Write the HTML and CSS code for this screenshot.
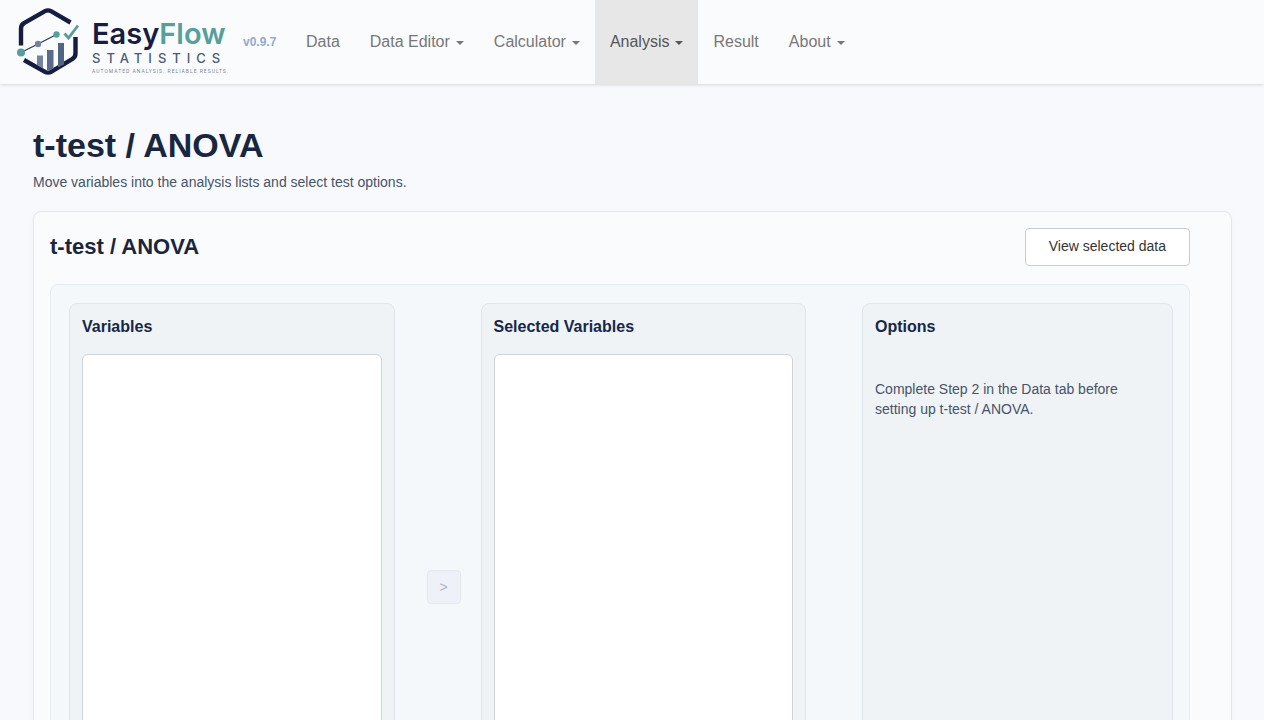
FILE: index.html
```html
<!DOCTYPE html>
<html lang="en">
<head>
    <meta charset="UTF-8">
    <meta name="viewport" content="width=device-width, initial-scale=1.0">
    <title>EasyFlow Statistics</title>
    <link rel="stylesheet" href="styles.css">
</head>
<body>
    <header class="navbar">
        <a class="brand" href="#">
            <svg class="brand-icon" width="64" height="70" viewBox="0 0 64 70" aria-hidden="true">
                <g fill="none" stroke="#171c42" stroke-width="4.400" stroke-linejoin="round">
                    <path d="M4 38.500V21.500Q4 18 7 16.200L28 4.200Q31 2.500 34 4.200L53.500 15.500"/>
                    <path d="M58.500 30V46.500Q58.500 50 55.500 51.800L34 64.800Q31 66.500 28 64.800L7 53"/>
                </g>
                <path d="M20 48.500H26V61.500L20 58Z" fill="#74829f"/>
                <path d="M30 43H36.500V61.500Q33 64 30 63Z" fill="#596b88"/>
                <path d="M41 36H47V57.500L41 60.500Z" fill="#506582"/>
                <path d="M4 45.500L21 37L39.500 27.500" fill="none" stroke="#30384f" stroke-width="1.300"/>
                <circle cx="4" cy="45.500" r="4" fill="#55a09c"/>
                <circle cx="21" cy="37" r="3.200" fill="#74839d"/>
                <circle cx="39.500" cy="27.500" r="3.200" fill="#55a09c"/>
                <path d="M47.500 26.500L51.500 31L61 18.500" fill="none" stroke="#55a09c" stroke-width="2.800"/>
            </svg>
            <span class="brand-text">
                <span class="brand-name">Easy<span class="brand-accent">Flow</span></span>
                <span class="brand-sub">STATISTICS</span>
                <span class="brand-tagline">AUTOMATED ANALYSIS. RELIABLE RESULTS.</span>
            </span>
        </a>
        <span class="version">v0.9.7</span>
        <nav class="nav">
            <a href="#">Data</a>
            <a href="#">Data Editor <span class="caret"></span></a>
            <a href="#">Calculator <span class="caret"></span></a>
            <a href="#" class="active">Analysis <span class="caret"></span></a>
            <a href="#">Result</a>
            <a href="#">About <span class="caret"></span></a>
        </nav>
    </header>

    <main class="page">
        <h1>t-test / ANOVA</h1>
        <p class="subtitle">Move variables into the analysis lists and select test options.</p>

        <section class="card">
            <div class="card-header">
                <h2>t-test / ANOVA</h2>
                <button class="btn" type="button">View selected data</button>
            </div>

            <div class="setup">
                <div class="panel">
                    <label for="variables">Variables</label>
                    <select id="variables" class="list" multiple></select>
                </div>
                <div class="move">
                    <button class="btn-move" type="button" disabled>&gt;</button>
                </div>
                <div class="panel">
                    <label for="selected">Selected Variables</label>
                    <select id="selected" class="list" multiple></select>
                </div>
                <div class="panel options">
                    <h3>Options</h3>
                    <p>Complete Step 2 in the Data tab before setting up t-test / ANOVA.</p>
                </div>
            </div>
        </section>
    </main>
</body>
</html>
```
FILE: styles.css
```css
* {
    box-sizing: border-box;
}

body {
    margin: 0;
    font-family: "Liberation Sans", Arial, sans-serif;
    font-size: 14px;
    line-height: 20px;
    color: #46536a;
    background-color: #f7f9fc;
}

/* Top bar */
.navbar {
    display: flex;
    align-items: stretch;
    height: 84px;
    padding-left: 17px;
    background-color: #fafbfd;
    box-shadow: 0 1px 3px rgba(20, 30, 50, 0.15);
}

.brand {
    display: flex;
    align-items: center;
    gap: 11px;
    width: 206px;
    text-decoration: none;
}

.brand-icon {
    flex: none;
    overflow: visible;
}

.brand-text {
    display: flex;
    flex-direction: column;
    padding-top: 10px;
    font-family: Inter, sans-serif;
    white-space: nowrap;
}

.brand-name {
    font-size: 29px;
    line-height: 32px;
    font-weight: 600;
    color: #171c42;
}

.brand-accent {
    color: #55a09c;
}

.brand-sub {
    font-size: 13px;
    line-height: 16px;
    font-weight: 500;
    letter-spacing: 6px;
    color: #4b5a76;
}

.brand-tagline {
    font-family: Roboto, sans-serif;
    font-size: 5px;
    line-height: 10px;
    letter-spacing: 1px;
    color: #7d8798;
}

.version {
    align-self: center;
    width: 48px;
    margin-left: 20px;
    font-size: 12px;
    font-weight: 700;
    color: #93a9d3;
}

.nav {
    display: flex;
}

.nav a {
    display: flex;
    align-items: center;
    gap: 6px;
    padding: 0 15px;
    font-size: 16px;
    color: #777;
    text-decoration: none;
}

.nav a:hover {
    color: #333;
}

.nav a.active {
    color: #555;
    background-color: #e7e7e7;
}

.caret {
    margin-top: 2px;
    border-top: 4px solid;
    border-left: 4px solid transparent;
    border-right: 4px solid transparent;
}

/* Page */
.page {
    padding: 39px 32px 32px 33px;
}

h1,
h2,
h3,
p {
    margin: 0;
}

h1 {
    font-size: 34px;
    line-height: 44px;
    color: #18263f;
}

.subtitle {
    margin-top: 5px;
}

.card {
    margin-top: 19px;
    padding: 16px 41px 16px 16px;
    background-color: #fafbfd;
    border: 1px solid #e2e6ed;
    border-radius: 8px;
    box-shadow: 0 2px 8px rgba(20, 30, 50, 0.03);
}

.card-header {
    display: flex;
    justify-content: space-between;
    align-items: center;
}

h2 {
    font-size: 22px;
    line-height: 28px;
    color: #18263f;
}

.btn {
    height: 38px;
    padding: 0 23px 2px;
    font: inherit;
    color: #333;
    background-color: #fff;
    border: 1px solid #ccc;
    border-radius: 4px;
    cursor: pointer;
}

.btn:hover {
    background-color: #e6e6e6;
}

/* Variable lists and options */
.setup {
    display: grid;
    grid-template-columns: 1fr 46px 1fr 347px;
    gap: 20px;
    margin-top: 18px;
    padding: 18px 16px 18px 18px;
    background-color: #f4f8fb;
    border: 1px solid #e6ebf1;
    border-radius: 8px;
}

.panel {
    padding: 12px;
    background-color: #eff3f6;
    border: 1px solid #e0e6eb;
    border-radius: 8px;
}

.panel label,
.panel h3 {
    display: block;
    font-size: 16px;
    line-height: 22px;
    font-weight: 700;
    color: #142849;
}

.list {
    display: block;
    width: 100%;
    height: 504px;
    margin-top: 16px;
    background-color: #fff;
    border: 1px solid #ccd4dc;
    border-radius: 6px;
}

.move {
    display: flex;
    align-items: center;
    justify-content: flex-end;
}

.btn-move {
    width: 34px;
    height: 34px;
    padding: 0;
    font: inherit;
    color: #afb5c0;
    background-color: #eef1f7;
    border: 1px solid #e4e8ee;
    border-radius: 4px;
}

.options {
    margin-left: 36px;
}

.options p {
    margin-top: 41px;
}
```
